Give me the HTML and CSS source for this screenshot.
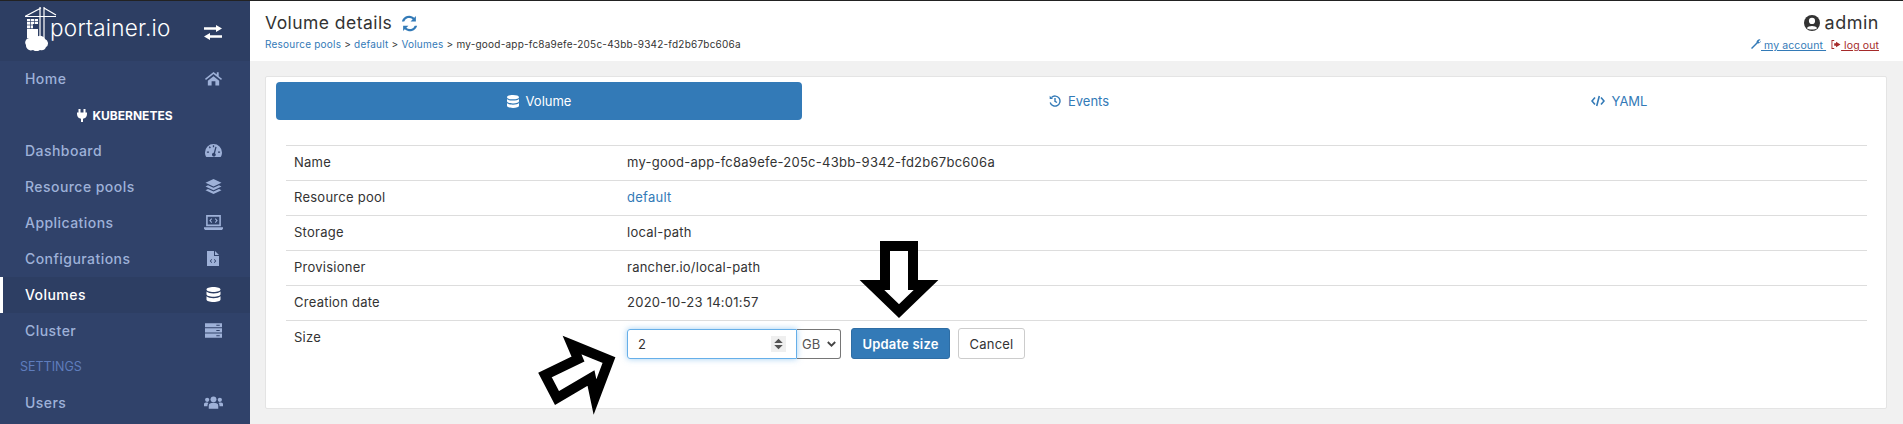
FILE: index.html
```html
<!DOCTYPE html>
<html lang="en">
<head>
    <meta charset="UTF-8">
    <meta name="viewport" content="width=device-width, initial-scale=1.0">
    <title>Volume details</title>
    <link rel="stylesheet" href="styles.css">
</head>
<body>
<div class="page">
    <aside class="sidebar">
        <div class="brand">
            <a class="logo" href="#">
                <svg class="logo-mark" width="32" height="44" viewBox="0 0 32 44">
                    <path d="M0 9.500 L16 1 M19 1 L31 8 M0 9.500 H31 M15 0 V35 M19 0 V33" fill="none" stroke="#fff" stroke-width="1.200"/>
                    <path d="M2 12 h11 v5 h-5 v5 h5 v9 h-11z" fill="#fff"/>
                    <path d="M2 14.500 h11 M2 18 h6 M2 21.500 h11 M5.500 12 v10 M9.500 12 v5" stroke="#30426a" stroke-width=".7" fill="none"/>
                    <path d="M1 38 a4.500 4.500 0 0 1 3 -7 a5 5 0 0 1 8 -1 a5 5 0 0 1 8 2 a4.500 4.500 0 0 1 1 8 a5 5 0 0 1 -6 3 a6 6 0 0 1 -7 0 a5 5 0 0 1 -7 -5z" fill="#fff"/>
                </svg>
                <span class="logo-text">portainer.io</span>
            </a>
            <svg class="toggle" width="18" height="15" viewBox="0 0 18 15" fill="#fff">
                <path d="M0 2.300 h12 V0 l6 3.500 -6 3.500 V4.700 H0z M18 10.300 H6 V8 L0 11.500 L6 15 V12.700 h12z"/>
            </svg>
        </div>
        <ul class="menu">
            <li class="menu-item"><a href="#">Home</a>
                <svg class="mi" viewBox="0 0 18 15" fill="currentColor"><path d="M9 .5 L0 7.800 L1 9.200 L9 2.800 L17 9.200 L18 7.800 L14.500 5 V1 H12.500 V3.300z M3 9.800 V15 H7 V10.500 H11 V15 H15 V9.800 L9 5z"/></svg>
            </li>
            <li class="menu-head"><svg width="10" height="13" viewBox="0 0 10 13" fill="#fff"><path d="M1.500 0 h2 v3.500 h3 V0 h2 v3.500 H10 V5 C10 8 8 9.500 6 9.800 V13 H4 V9.800 C2 9.500 0 8 0 5 V3.500 h1.500z"/></svg> KUBERNETES</li>
            <li class="menu-item"><a href="#">Dashboard</a>
                <svg class="mi" viewBox="0 0 18 14" fill="currentColor"><path fill-rule="evenodd" d="M9 0 A9 9 0 0 0 0 9 C0 11 .5 12.500 1.500 14 H16.500 C17.500 12.500 18 11 18 9 A9 9 0 0 0 9 0z M8.300 1.500 h1.400 v2 h-1.400z M4 3.300 l1.200 -.8 1 1.600 -1.200 .8z M2 8 h2.200 v1.300 h-2.200z M13.800 8 h2.200 v1.300 h-2.200z M11 3 l1.300 .4 -1.700 6.400 a2 2 0 1 1 -1.300 -.4z"/></svg>
            </li>
            <li class="menu-item"><a href="#">Resource pools</a>
                <svg class="mi" viewBox="0 0 16 15" fill="currentColor"><path d="M8 0 L16 3.800 L8 7.600 L0 3.800z M2.500 6.200 L8 8.800 L13.500 6.200 L16 7.500 L8 11.300 L0 7.500z M2.500 9.900 L8 12.500 L13.500 9.900 L16 11.200 L8 15 L0 11.200z"/></svg>
            </li>
            <li class="menu-item"><a href="#">Applications</a>
                <svg class="mi mi-wide" viewBox="0 0 18 14" fill="currentColor"><path fill-rule="evenodd" d="M2 0 H16 V10.500 H2z M3.500 1.500 V9 H14.500 V1.500z M0 11.500 H18 V13 L17 14 H1 L0 13z M7 3 L5 5.200 L7 7.400 L7.700 6.700 L6.400 5.200 L7.700 3.700z M11 3 L13 5.200 L11 7.400 L10.300 6.700 L11.600 5.200 L10.300 3.700z"/></svg>
            </li>
            <li class="menu-item"><a href="#">Configurations</a>
                <svg class="mi mi-file" viewBox="0 0 12 15" fill="currentColor"><path fill-rule="evenodd" d="M0 0 H7 V5 H12 V15 H0z M8 0 L12 4 H8z M4.500 8 L2.800 10 L4.500 12 L5.100 11.400 L3.900 10 L5.100 8.600z M7.500 8 L9.200 10 L7.500 12 L6.900 11.400 L8.100 10 L6.900 8.600z"/></svg>
            </li>
            <li class="menu-item active"><a href="#">Volumes</a>
                <svg class="mi" viewBox="0 0 14 15" fill="currentColor"><path d="M7 0 C11 0 14 1 14 2.500 C14 4 11 5 7 5 C3 5 0 4 0 2.500 C0 1 3 0 7 0z M0 4.500 C1 5.800 4 6.400 7 6.400 C10 6.400 13 5.800 14 4.500 V7.200 C14 8.700 11 9.700 7 9.700 C3 9.700 0 8.700 0 7.200z M0 9.300 C1 10.600 4 11.200 7 11.200 C10 11.200 13 10.600 14 9.300 V12.500 C14 14 11 15 7 15 C3 15 0 14 0 12.500z"/></svg>
            </li>
            <li class="menu-item"><a href="#">Cluster</a>
                <svg class="mi" viewBox="0 0 15 13" fill="currentColor"><path fill-rule="evenodd" d="M0 0 H15 V3.700 H0z M10 1.400 v.9 h3 v-.9z M0 4.600 H15 V8.300 H0z M10 6 v.9 h3 v-.9z M0 9.200 H15 V13 H0z M10 10.700 v.9 h3 v-.9z"/></svg>
            </li>
            <li class="menu-title">SETTINGS</li>
            <li class="menu-item"><a href="#">Users</a>
                <svg class="mi mi-wide" viewBox="0 0 18 12" fill="currentColor"><circle cx="9" cy="3" r="2.800"/><circle cx="3" cy="3.500" r="2"/><circle cx="15" cy="3.500" r="2"/><path d="M4.500 12 V9 C4.500 7 6 6.200 9 6.200 C12 6.200 13.500 7 13.500 9 V12z M0 9.500 V7.500 C0 6.300 1.500 6 3 6 L4.200 6.500 C3.500 7.300 3.300 8.300 3.300 9.500z M18 9.500 V7.500 C18 6.300 16.500 6 15 6 L13.800 6.500 C14.500 7.300 14.700 8.300 14.700 9.500z"/></svg>
            </li>
        </ul>
    </aside>

    <div class="content">
        <header class="topbar">
            <div class="topbar-left">
                <h1 class="title">Volume details
                    <svg class="refresh" width="17" height="17" viewBox="0 0 16 16" fill="#337ab7"><path d="M14 1 V6 H9 L11 4 A5 5 0 0 0 3 6 H.8 A7.200 7.200 0 0 1 12.500 2.500z M2 15 V10 H7 L5 12 A5 5 0 0 0 13 10 H15.200 A7.200 7.200 0 0 1 3.500 13.500z"/></svg>
                </h1>
                <div class="crumbs"><a href="#">Resource pools</a> &gt; <a href="#">default</a> &gt; <a href="#">Volumes</a> &gt; my-good-app-fc8a9efe-205c-43bb-9342-fd2b67bc606a</div>
            </div>
            <div class="topbar-right">
                <div class="user">
                    <svg width="16" height="16" viewBox="0 0 14 14"><circle cx="7" cy="7" r="7" fill="#333"/><circle cx="7" cy="5.200" r="2.700" fill="#fff"/><path d="M2.500 11.500 C3.500 9 10.500 9 11.500 11.500 C10 13 4 13 2.500 11.500z" fill="#fff"/></svg>
                    admin
                </div>
                <div class="user-links">
                    <svg width="10" height="10" viewBox="0 0 10 10" fill="#337ab7"><path d="M0 9 L5.500 3.500 A3 3 0 0 1 9.500 .500 L7.500 2.500 L8.500 3.500 L10 1.500 A3 3 0 0 1 6.500 4.500 L1 10z"/></svg><a class="link-account" href="#"> my account </a>
                    <svg class="out-icon" width="10" height="9" viewBox="0 0 10 10" fill="#a52a2a"><path d="M3 1 H1 V9 H3 V10 H0 V0 H3z M5 2 L10 5 L5 8 V6.500 H3 V3.500 H5z"/></svg><a class="link-logout" href="#"> log out</a>
                </div>
            </div>
        </header>

        <main class="main">
            <section class="card">
                <nav class="tabs">
                    <a class="tab tab-active" href="#">
                        <svg width="12" height="13" viewBox="0 0 14 15" fill="currentColor"><path d="M7 0 C11 0 14 1 14 2.500 C14 4 11 5 7 5 C3 5 0 4 0 2.500 C0 1 3 0 7 0z M0 4.500 C1 5.800 4 6.400 7 6.400 C10 6.400 13 5.800 14 4.500 V7.200 C14 8.700 11 9.700 7 9.700 C3 9.700 0 8.700 0 7.200z M0 9.300 C1 10.600 4 11.200 7 11.200 C10 11.200 13 10.600 14 9.300 V12.500 C14 14 11 15 7 15 C3 15 0 14 0 12.500z"/></svg>
                        Volume</a>
                    <a class="tab" href="#">
                        <svg width="12" height="12" viewBox="0 0 12 12" fill="none" stroke="currentColor" stroke-width="1.400"><path d="M2.500 2.500 A5 5 0 1 1 1.200 7.500 M6 3 V6.300 L8 7.500"/><path d="M.7 .7 V4 H4z" fill="currentColor" stroke="none"/></svg>
                        Events</a>
                    <a class="tab" href="#">
                        <svg width="14" height="12" viewBox="0 0 14 12" fill="none" stroke="currentColor" stroke-width="1.600"><path d="M4 2.500 L1 6 L4 9.500 M10 2.500 L13 6 L10 9.500 M8.300 1 L5.700 11"/></svg>
                        YAML</a>
                </nav>
                <div class="details">
                    <div class="row"><div class="label">Name</div><div class="value">my-good-app-fc8a9efe-205c-43bb-9342-fd2b67bc606a</div></div>
                    <div class="row"><div class="label">Resource pool</div><div class="value"><a href="#">default</a></div></div>
                    <div class="row"><div class="label">Storage</div><div class="value">local-path</div></div>
                    <div class="row"><div class="label">Provisioner</div><div class="value">rancher.io/local-path</div></div>
                    <div class="row"><div class="label">Creation date</div><div class="value">2020-10-23 14:01:57</div></div>
                    <div class="row row-size">
                        <div class="label">Size</div>
                        <div class="value size-form">
                            <div class="fake-input">2
                                <svg class="spin" width="15" height="16" viewBox="0 0 14 15"><rect width="14" height="15" fill="#efefef"/><path d="M7 2.500 L11 6.500 H3z M7 12.500 L11 8.500 H3z" fill="#555"/></svg>
                            </div>
                            <div class="fake-select">GB
                                <svg width="9" height="6" viewBox="0 0 9 6" fill="none" stroke="#444" stroke-width="1.800"><path d="M.8 1 L4.500 4.700 L8.200 1"/></svg>
                            </div>
                            <button class="btn btn-primary">Update size</button>
                            <button class="btn btn-default">Cancel</button>
                        </div>
                    </div>
                </div>
            </section>
        </main>
    </div>
</div>

<!-- hand drawn arrows on top of the screenshot -->
<svg class="arrows" width="1903" height="424" viewBox="0 0 1903 424">
    <path d="M885 246 H913 V285 H926 L899 311 L872 285 H885z" fill="#fff" stroke="#000" stroke-width="10"/>
    <path d="M572 345 L609 360 L595 397 L591 378 L557 398 L545 375 L578 359z" fill="#fff" stroke="#000" stroke-width="10"/>
</svg>
</body>
</html>
```

FILE: styles.css
```css
* {
    box-sizing: border-box;
}
html, body {
    margin: 0;
    height: 100%;
    overflow: hidden;
}
body {
    font-family: Inter, "Open Sans", sans-serif;
    font-size: 13px;
    color: #333;
    background: #f1f1f1;
}
a {
    color: #337ab7;
    text-decoration: none;
}
.page {
    display: flex;
    height: 100vh;
    border-top: 1px solid #222;
}

/* sidebar */
.sidebar {
    width: 250px;
    flex: none;
    background: #30426a;
}
.brand {
    height: 60px;
    background: #2d3e63;
    display: flex;
    align-items: flex-start;
    justify-content: space-between;
    padding: 6px 28px 0 25px;
}
.logo {
    display: flex;
    align-items: flex-start;
    color: #fff;
}
.logo-text {
    font-size: 22.500px;
    font-weight: 300;
    letter-spacing: .25px;
    margin: 7px 0 0 -7px;
}
.toggle {
    margin-top: 18px;
}
.menu {
    list-style: none;
    margin: 0;
    padding: 0;
}
.menu-item {
    height: 36px;
    display: flex;
    align-items: center;
    justify-content: space-between;
    padding: 0 28px 2px 25px;
    color: #9eb1d8;
}
.menu-item a {
    color: inherit;
    font-size: 14px;
    font-weight: 500;
    letter-spacing: .45px;
}
.mi {
    width: 17px;
    height: 15px;
}
.mi-wide {
    width: 19px;
    margin-right: -1px;
}
.mi-file {
    width: 12px;
    margin-right: 3px;
}
.menu-item.active {
    background: #2d3e63;
    border-left: 3px solid #fff;
    padding-left: 22px;
    color: #fff;
}
.menu-head {
    height: 36px;
    display: flex;
    align-items: center;
    justify-content: center;
    gap: 5px;
    color: #fff;
    font-size: 12px;
    font-weight: 700;
}
.menu-title {
    height: 36px;
    line-height: 36px;
    padding-left: 20px;
    color: #5f7dbd;
    font-size: 12.500px;
}

/* top bar */
.content {
    flex: 1;
    display: flex;
    flex-direction: column;
    min-width: 0;
}
.topbar {
    height: 60px;
    background: #fff;
    display: flex;
    justify-content: space-between;
    padding: 0 24px 0 15px;
}
.title {
    margin: 12px 0 0;
    font-size: 17.500px;
    font-weight: 400;
    letter-spacing: .45px;
    line-height: 20px;
    color: #333;
    display: flex;
    align-items: center;
    gap: 9px;
}
.crumbs {
    font-size: 10px;
    margin-top: 4px;
    letter-spacing: .22px;
    line-height: 14px;
}
.topbar-right {
    text-align: right;
}
.user {
    margin-top: 12px;
    font-size: 18px;
    letter-spacing: .5px;
    line-height: 20px;
    display: flex;
    justify-content: flex-end;
    align-items: center;
    gap: 5px;
}
.user-links {
    font-size: 10.500px;
    letter-spacing: .1px;
    line-height: 15px;
    margin-top: 5px;
}
.link-account {
    text-decoration: underline;
}
.link-logout {
    color: #a52a2a;
    text-decoration: underline;
}
.out-icon {
    margin-left: 5px;
}

/* main card */
.main {
    flex: 1;
    padding: 15px 16px 0 15px;
}
.card {
    background: #fff;
    border: 1px solid #e4e4e4;
    height: 333px;
    padding: 5px 4px 0 10px;
    border-radius: 2px;
}
.tabs {
    display: grid;
    grid-template-columns: repeat(3, 1fr);
    gap: 14px;
}
.tab {
    height: 38px;
    display: flex;
    align-items: center;
    justify-content: center;
    gap: 7px;
    font-size: 13px;
    border-radius: 4px;
}
.tab-active {
    background: #337ab7;
    color: #fff;
}
.details {
    margin: 25px 15px 0 10px;
    border-top: 1px solid #ddd;
}
.row {
    display: flex;
    height: 35px;
    padding-bottom: 2px;
    align-items: center;
    border-bottom: 1px solid #ddd;
    letter-spacing: .25px;
}
.row-size {
    border-bottom: 0;
    align-items: flex-start;
    padding-top: 8px;
    height: 50px;
}
.label {
    width: 341px;
    padding-left: 8px;
    flex: none;
}
.size-form {
    display: flex;
    align-items: flex-start;
    margin-top: -1px;
}
.fake-input {
    width: 170px;
    height: 30px;
    margin-top: 1px;
    border: 1px solid #66afe9;
    border-radius: 3px 0 0 3px;
    box-shadow: 0 0 6px rgba(102, 175, 233, .6);
    display: flex;
    align-items: center;
    justify-content: space-between;
    padding: 0 10px 0 10px;
    font-size: 13px;
}
.fake-select {
    width: 44px;
    height: 30px;
    margin-top: 1px;
    border: 1px solid #767676;
    border-left: 0;
    border-radius: 0 3px 3px 0;
    display: flex;
    align-items: center;
    justify-content: space-between;
    padding: 0 4px 0 5px;
    font-size: 13px;
    color: #555;
    letter-spacing: 0;
}
.btn {
    height: 31px;
    font-family: inherit;
    font-size: 13px;
    border-radius: 3px;
    border: 1px solid #ccc;
    padding: 0;
    background: #fff;
    color: #333;
    letter-spacing: .2px;
}
.btn-primary {
    width: 99px;
    margin-left: 10px;
    background: #337ab7;
    border-color: #2e6da4;
    color: #fff;
    font-weight: 600;
}
.btn-default {
    width: 67px;
    margin-left: 8px;
}
.arrows {
    position: absolute;
    left: 0;
    top: 0;
    pointer-events: none;
}
```
